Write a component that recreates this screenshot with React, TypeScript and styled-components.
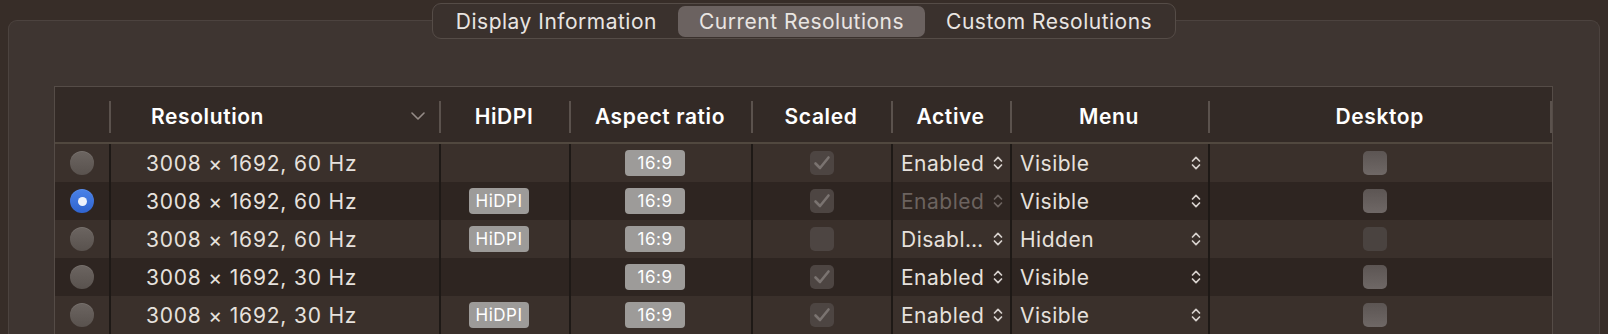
import { createGlobalStyle, styled } from "styled-components";

const GlobalStyle = createGlobalStyle`
  html, body {
    margin: 0;
    padding: 0;
    background: #372d28;
  }
  body {
    font-family: Inter, "Noto Sans", "Liberation Sans", sans-serif;
    -webkit-font-smoothing: antialiased;
  }
`;

const COLUMNS = "54px 330px 130px 182px 140px 119px 198px 1fr";

const Page = styled.div`
  display: flex;
  flex-direction: column;
  height: 334px;
  padding: 3px 8px 0 8px;
  box-sizing: border-box;
  overflow: hidden;
  background: #372d28;
`;

const TabBar = styled.div`
  align-self: center;
  display: flex;
  padding: 1.5px;
  height: 36px;
  box-sizing: border-box;
  border: 1.5px solid #554c47;
  border-radius: 9px;
  background: #3a312d;
  margin-bottom: -19px;
  position: relative;
  z-index: 1;
`;

const Tab = styled.div<{ $active?: boolean }>`
  display: flex;
  align-items: center;
  padding: 0 21px;
  border-radius: 7px;
  font-size: 21px;
  letter-spacing: 0.5px;
  color: #e9e5e2;
  background: ${(p) => (p.$active ? "#6b6260" : "transparent")};
`;

const Panel = styled.div`
  flex: 1;
  border: 1.5px solid #4c433f;
  border-bottom: none;
  border-radius: 9px 9px 0 0;
  background: #3e3531;
  padding: 65px 46.5px 0 45px;
`;

const Table = styled.div`
  border: 1.5px solid #554c47;
  border-bottom: none;
  background: #332a26;
`;

const HeaderRow = styled.div`
  display: grid;
  grid-template-columns: ${COLUMNS};
  height: 52px;
  padding-top: 3px;
  box-sizing: content-box;
  border-bottom: 2px solid #51483f;
`;

const HeaderCell = styled.div<{ $divider?: boolean; $end?: boolean; $left?: boolean }>`
  position: relative;
  display: flex;
  align-items: center;
  justify-content: ${(p) => (p.$left ? "space-between" : "center")};
  padding: ${(p) => (p.$left ? "0 14px 0 42px" : "0")};
  font-size: 21px;
  font-weight: 600;
  letter-spacing: 0.6px;
  color: #ffffff;

  &::before {
    content: "";
    display: ${(p) => (p.$divider ? "block" : "none")};
    position: absolute;
    left: 0;
    top: 11px;
    width: 2px;
    height: 32px;
    background: #5b524d;
  }

  &::after {
    content: "";
    display: ${(p) => (p.$end ? "block" : "none")};
    position: absolute;
    right: 0;
    top: 11px;
    width: 2px;
    height: 32px;
    background: #5b524d;
  }
`;

const Row = styled.div<{ $alt: boolean }>`
  display: grid;
  grid-template-columns: ${COLUMNS};
  height: 38px;
  background: ${(p) => (p.$alt ? "#2e2521" : "#3a302b")};
`;

const Cell = styled.div<{ $align?: "left" | "center"; $first?: boolean; $shift?: boolean }>`
  display: flex;
  align-items: center;
  justify-content: ${(p) => (p.$align === "left" ? "flex-start" : "center")};
  min-width: 0;
  border-left: ${(p) => (p.$first ? "none" : "2px solid #1e1916")};
  padding-right: ${(p) => (p.$shift ? "12px" : "0")};
  font-size: 21px;
  letter-spacing: 0.8px;
  color: #e6e1dd;
`;

const ResolutionText = styled.span`
  padding-left: 35px;
  white-space: nowrap;
`;

const Radio = styled.span<{ $on?: boolean }>`
  display: flex;
  align-items: center;
  justify-content: center;
  width: 24px;
  height: 24px;
  border-radius: 50%;
  background: ${(p) =>
    p.$on
      ? "linear-gradient(#4a82e8, #3064cf)"
      : "linear-gradient(#6c6561, #59524e)"};
  box-shadow: inset 0 1px 0 rgba(255, 255, 255, 0.08);

  &::after {
    content: "";
    display: ${(p) => (p.$on ? "block" : "none")};
    width: 9px;
    height: 9px;
    border-radius: 50%;
    background: #eef2fb;
  }
`;

const Badge = styled.span`
  display: flex;
  align-items: center;
  justify-content: center;
  width: 60px;
  height: 26px;
  border-radius: 4px;
  background: #9d9b99;
  color: #ffffff;
  font-size: 17px;
  letter-spacing: 0.5px;
`;

const CheckBox = styled.span<{ $tone: "dim" | "raised" | "off" }>`
  display: flex;
  align-items: center;
  justify-content: center;
  width: 24px;
  height: 24px;
  border-radius: 5px;
  background: ${(p) =>
    p.$tone === "raised"
      ? "linear-gradient(#5c5553, #6f6866)"
      : p.$tone === "off"
        ? "#4a4340"
        : "#4d4542"};
`;

const Popup = styled.div<{ $disabled?: boolean }>`
  display: flex;
  align-items: center;
  justify-content: space-between;
  width: 100%;
  padding: 0 7px 0 8px;
  letter-spacing: 0.5px;
  color: ${(p) => (p.$disabled ? "#6c635f" : "#e6e1dd")};
  white-space: nowrap;
`;

const Check = () => (
  <svg width="18" height="16" viewBox="0 0 18 16">
    <path
      d="M2.5 8.5 L7 13 L15.5 2.5"
      fill="none"
      stroke="#7a7370"
      strokeWidth="2.6"
      strokeLinecap="round"
      strokeLinejoin="round"
    />
  </svg>
);

const UpDown = ({ dim }: { dim?: boolean }) => (
  <svg width="10" height="16" viewBox="0 0 10 16">
    <path
      d="M1.5 6 L5 2.3 L8.5 6 M1.5 10 L5 13.7 L8.5 10"
      fill="none"
      stroke={dim ? "#6c635f" : "#d6d0cc"}
      strokeWidth="1.7"
      strokeLinecap="round"
      strokeLinejoin="round"
    />
  </svg>
);

const SortChevron = () => (
  <svg width="14" height="8" viewBox="0 0 14 8">
    <path
      d="M1 1 L7 7 L13 1"
      fill="none"
      stroke="#958c87"
      strokeWidth="1.6"
      strokeLinecap="round"
      strokeLinejoin="round"
    />
  </svg>
);

type Item = {
  text: string;
  selected?: boolean;
  hidpi?: boolean;
  scaled: boolean;
  active: string;
  activeDisabled?: boolean;
  menu: string;
  desktopOff?: boolean;
};

const rows: Item[] = [
  { text: "3008 × 1692, 60 Hz", scaled: true, active: "Enabled", menu: "Visible" },
  {
    text: "3008 × 1692, 60 Hz",
    selected: true,
    hidpi: true,
    scaled: true,
    active: "Enabled",
    activeDisabled: true,
    menu: "Visible",
  },
  {
    text: "3008 × 1692, 60 Hz",
    hidpi: true,
    scaled: false,
    active: "Disabl…",
    menu: "Hidden",
    desktopOff: true,
  },
  { text: "3008 × 1692, 30 Hz", scaled: true, active: "Enabled", menu: "Visible" },
  { text: "3008 × 1692, 30 Hz", hidpi: true, scaled: true, active: "Enabled", menu: "Visible" },
];

const App = () => {
  return (
    <>
      <GlobalStyle />
      <Page>
        <TabBar>
          <Tab>Display Information</Tab>
          <Tab $active>Current Resolutions</Tab>
          <Tab>Custom Resolutions</Tab>
        </TabBar>
        <Panel>
          <Table>
            <HeaderRow>
              <HeaderCell />
              <HeaderCell $divider $left>
                Resolution
                <SortChevron />
              </HeaderCell>
              <HeaderCell $divider>HiDPI</HeaderCell>
              <HeaderCell $divider>Aspect ratio</HeaderCell>
              <HeaderCell $divider>Scaled</HeaderCell>
              <HeaderCell $divider>Active</HeaderCell>
              <HeaderCell $divider>Menu</HeaderCell>
              <HeaderCell $divider $end>
                Desktop
              </HeaderCell>
            </HeaderRow>
            {rows.map((r, i) => (
              <Row key={i} $alt={i % 2 === 1}>
                <Cell $first>
                  <Radio $on={r.selected} />
                </Cell>
                <Cell $align="left">
                  <ResolutionText>{r.text}</ResolutionText>
                </Cell>
                <Cell $shift>{r.hidpi && <Badge>HiDPI</Badge>}</Cell>
                <Cell $shift>
                  <Badge>16:9</Badge>
                </Cell>
                <Cell>
                  <CheckBox $tone="dim">{r.scaled && <Check />}</CheckBox>
                </Cell>
                <Cell>
                  <Popup $disabled={r.activeDisabled}>
                    {r.active}
                    <UpDown dim={r.activeDisabled} />
                  </Popup>
                </Cell>
                <Cell>
                  <Popup>
                    {r.menu}
                    <UpDown />
                  </Popup>
                </Cell>
                <Cell $shift>
                  <CheckBox $tone={r.desktopOff ? "off" : "raised"} />
                </Cell>
              </Row>
            ))}
          </Table>
        </Panel>
      </Page>
    </>
  );
};

export default App;
